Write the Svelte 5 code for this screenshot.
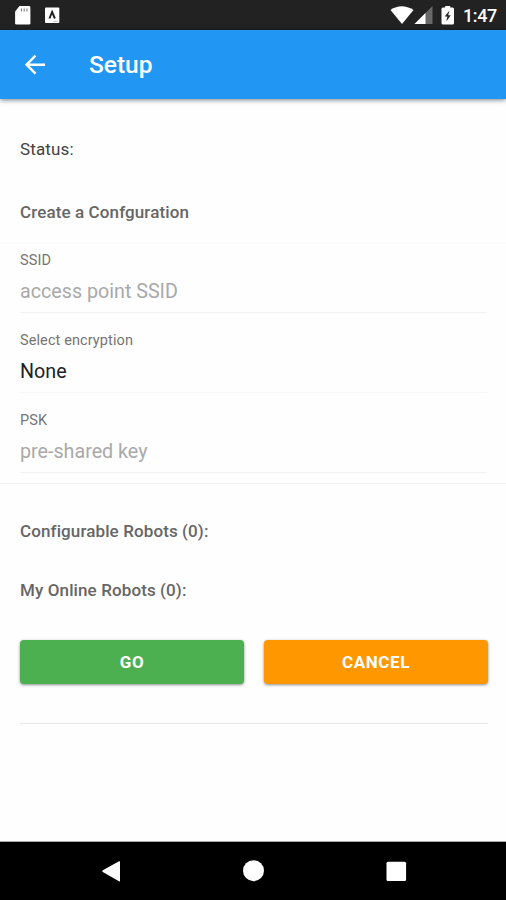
<script>
  const fields = [
    { label: 'SSID', value: 'access point SSID', placeholder: true },
    { label: 'Select encryption', value: 'None', placeholder: false },
    { label: 'PSK', value: 'pre-shared key', placeholder: true }
  ];
</script>

<div class="screen">
  <div class="status-bar">
    <svg width="80" height="30" viewBox="0 0 80 30">
      <path d="M19.500 6H29q1.400 0 1.400 1.400v15.800q0 1.400-1.400 1.400H16.600q-1.500 0-1.500-1.400V11.500z" fill="#fff" />
      <path d="M21.500 8.500v3M24.200 8.500v3M26.900 8.500v3" stroke="#888" stroke-width="1.200" />
      <rect x="45" y="7.500" width="14.300" height="15.500" rx="1" fill="#fff" />
      <path d="M49.400 18.500l2.700-6.500 2.800 6.500" fill="none" stroke="#222" stroke-width="1.900" />
      <path d="M53.500 21.300h4" stroke="#bbb" stroke-width="1" />
    </svg>
    <div class="right">
      <svg width="68" height="30" viewBox="390 0 68 30">
        <path d="M390.500 10Q401.500 2.500 413.500 10L402 24z" fill="#fff" />
        <path d="M432.500 6V24H414.500z" fill="#686868" />
        <path d="M425.500 13V24H414.500z" fill="#fff" />
        <path d="M443 7.500h2.200V6h5v1.500h2.300q1.500 0 1.500 1.500v14q0 1.500-1.500 1.500H443q-1.500 0-1.500-1.500V9q0-1.500 1.500-1.500z" fill="#fff" />
        <path d="M449.500 10.500l-4.800 6h2.700l-1.200 5 4.600-6.300h-2.600z" fill="#222" />
      </svg>
      <span class="clock">1:47</span>
    </div>
  </div>

  <header>
    <svg class="back" width="24" height="24" viewBox="0 0 24 24">
      <path d="M22 11.700H4M12.500 2.700L3.500 11.700l9 9" fill="none" stroke="#fff" stroke-width="2.400" />
    </svg>
    <h1>Setup</h1>
  </header>

  <main>
    <p class="status">Status:</p>
    <p class="create">Create a Confguration</p>
    <div class="fields">
      {#each fields as field}
        <div class="field">
          <div class="label">{field.label}</div>
          <div class="value" class:placeholder={field.placeholder}>{field.value}</div>
        </div>
      {/each}
    </div>
    <p class="configurable">Configurable Robots (0):</p>
    <p class="online">My Online Robots (0):</p>
    <div class="buttons">
      <button class="go">GO</button>
      <button class="cancel">CANCEL</button>
    </div>
    <hr />
  </main>

  <nav>
    <svg width="506" height="58" viewBox="0 0 506 58">
      <path d="M102.800 28.300L119 19.300q1-.5 1 .5v19q0 1-1 .5L102.800 30.100q-1.200-.9 0-1.800z" fill="#fff" />
      <circle cx="253.500" cy="28.700" r="10.500" fill="#fff" />
      <rect x="386.500" y="19.800" width="19.600" height="19.200" rx="1.500" fill="#fff" />
    </svg>
  </nav>
</div>

<style>
  .screen {
    display: flex;
    flex-direction: column;
    width: 506px;
    height: 900px;
    background: #fefefe;
    font-family: Roboto, "Liberation Sans", sans-serif;
    overflow: hidden;
  }
  .status-bar {
    flex: none;
    height: 30px;
    background: #222;
    display: flex;
    justify-content: space-between;
  }
  svg { display: block; }
  .right { display: flex; }
  .clock {
    width: 43px;
    margin-left: 5px;
    line-height: 32px;
    color: #fff;
    font-size: 18px;
    font-weight: 500;
    letter-spacing: -0.4px;
  }
  header {
    flex: none;
    height: 69px;
    display: flex;
    align-items: center;
    background: #2196f3;
    box-shadow: 0 1px 5px rgba(0, 0, 0, 0.5);
  }
  .back { margin-left: 23px; }
  h1 {
    margin: 0 0 0 42px;
    color: #fff;
    font-size: 24.5px;
    line-height: 32px;
    font-weight: 500;
    letter-spacing: 0;
  }
  main {
    flex: 1;
    display: flex;
    flex-direction: column;
  }
  p {
    margin: 0 20px;
    height: 20px;
    line-height: 20px;
    font-size: 17px;
    color: #666;
    font-weight: 500;
    letter-spacing: 0.11px;
    white-space: nowrap;
  }
  .status {
    margin-top: 40px;
    color: #424242;
    font-weight: 400;
    letter-spacing: 0.15px;
  }
  .create { margin-top: 43px; }
  .fields {
    margin-top: 21px;
    height: 241px;
    box-sizing: border-box;
    border-top: 1px solid #fafafa;
    border-bottom: 1px solid #f1f1f1;
    padding: 0 19px 0 20px;
  }
  .field {
    height: 69px;
    box-sizing: border-box;
    padding-top: 8px;
    border-bottom: 1px solid #f2f2f2;
  }
  .field + .field { margin-top: 11px; }
  .field:nth-child(2) { border-color: #f8f8f8; }
  .label {
    line-height: 18px;
    font-size: 14.5px;
    letter-spacing: 0.1px;
    color: #757575;
  }
  .value {
    margin-top: 10px;
    line-height: 24px;
    font-size: 19.7px;
    color: #212121;
  }
  .value.placeholder { color: #a9a9a9; }
  .configurable { margin-top: 37px; }
  .online { margin-top: 39px; }
  .buttons {
    display: flex;
    gap: 20px;
    margin: 40px 18px 0 20px;
  }
  button {
    flex: 1;
    height: 44px;
    padding: 0;
    border: 0;
    border-radius: 4px;
    font-family: inherit;
    font-size: 17px;
    font-weight: 700;
    letter-spacing: 0.6px;
    color: #fff;
    box-shadow: 0 1px 3px rgba(0, 0, 0, 0.45);
  }
  .go { background: #4caf50; }
  .cancel { background: #ff9800; }
  hr {
    width: 468px;
    height: 1px;
    margin: 39px 0 0 20px;
    border: 0;
    background: #e8e8e8;
  }
  nav {
    flex: none;
    height: 58px;
    background: #000;
    box-shadow: 0 -1px 0 #aaa;
  }
</style>
